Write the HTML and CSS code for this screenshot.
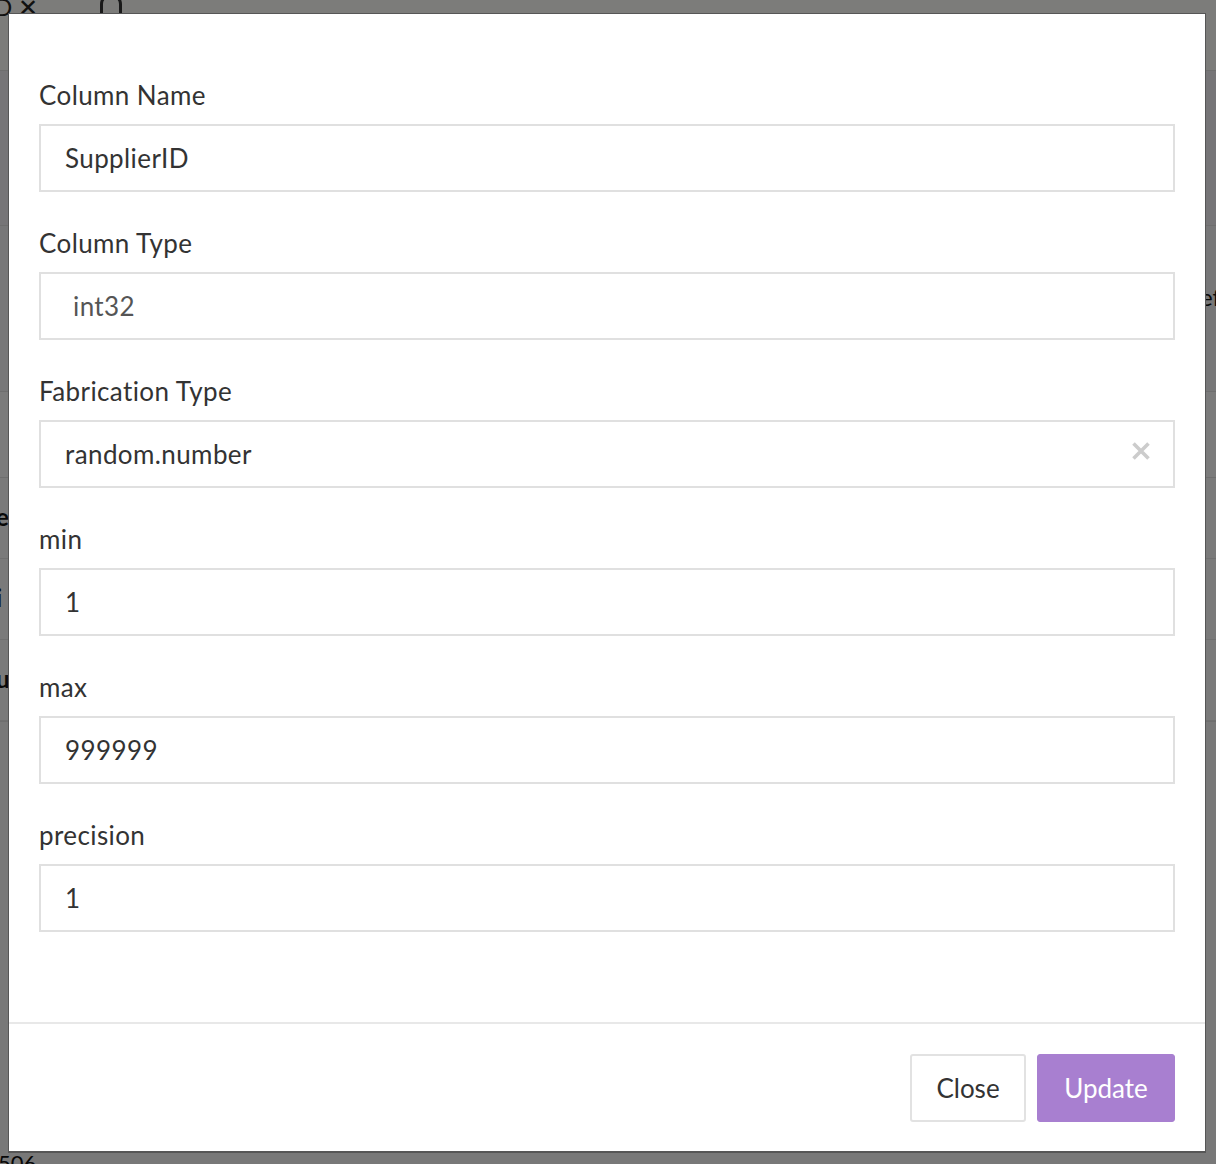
FILE: index.html
```html
<!DOCTYPE html>
<html lang="en">
<head>
<meta charset="utf-8">
<title>Edit Column</title>
<link rel="stylesheet" href="styles.css">
</head>
<body>
<div class="page">
  <div class="topbar"><span class="tb-x">D ✕</span><span class="tb-bell"></span></div>
  <div class="band band-a"></div>
  <div class="band band-b"><span class="frag frag-r">ef</span></div>
  <div class="band band-c"></div>
  <div class="rows">
    <div class="row"><span class="frag">er</span></div>
    <div class="row"><span class="frag">i</span></div>
    <div class="row"><span class="frag">u</span></div>
  </div>
  <div class="foot"><span class="frag">506</span></div>
</div>
<div class="backdrop"></div>
<div class="modal">
  <div class="modal-body">
    <div class="field">
      <label class="label">Column Name</label>
      <div class="input">SupplierID</div>
    </div>
    <div class="field">
      <label class="label">Column Type</label>
      <div class="input input-disabled">int32</div>
    </div>
    <div class="field">
      <label class="label">Fabrication Type</label>
      <div class="input input-select">random.number
        <svg class="clear" width="18" height="18" viewBox="0 0 18 18"><path d="M1.5 1.5 L16.5 16.5 M16.5 1.5 L1.5 16.5" stroke="#cccccc" stroke-width="3.6" stroke-linecap="butt"/></svg>
      </div>
    </div>
    <div class="field">
      <label class="label">min</label>
      <div class="input">1</div>
    </div>
    <div class="field">
      <label class="label">max</label>
      <div class="input">999999</div>
    </div>
    <div class="field">
      <label class="label">precision</label>
      <div class="input">1</div>
    </div>
  </div>
  <div class="modal-footer">
    <button class="btn btn-default">Close</button>
    <button class="btn btn-primary">Update</button>
  </div>
</div>
</body>
</html>
```

FILE: styles.css
```css
html, body {
  margin: 0;
  padding: 0;
  height: 100%;
}
body {
  font-family: "Lato", "Liberation Sans", sans-serif;
  color: #333;
  background: #f5f5f5;
  overflow: hidden;
}
.page {
  height: 1164px;
  display: flex;
  flex-direction: column;
  background: #f7f7f7;
}
.topbar {
  height: 70px;
  background: #f8f9f4;
  border-bottom: 1px solid #ddd;
  position: relative;
}
.tb-x {
  position: absolute;
  left: -6px;
  top: -8px;
  font-size: 24px;
  color: #222;
}
.tb-bell {
  position: absolute;
  left: 100px;
  top: -6px;
  width: 16px;
  height: 16px;
  border: 3px solid #333;
  border-radius: 10px 10px 0 0;
}
.band {
  border-bottom: 1px solid #ddd;
}
.band-a { height: 154px; background: #ecebee; }
.band-b { height: 165px; background: #eeeef0; position: relative; }
.band-c { height: 85px; background: #f6f6f6; }
.rows { display: flex; flex-direction: column; }
.row {
  height: 80px;
  border-bottom: 1px solid #e0e0e0;
  background: #f4f4f4;
  position: relative;
}
.frag {
  position: absolute;
  left: -4px;
  top: 24px;
  font-size: 24px;
  font-weight: bold;
  color: #111;
}
.frag-r { left: 1200px; top: 56px; font-weight: normal; }
.foot { flex: 1; position: relative; background: #f0f0f0; border-top: 1px solid #ddd; }
.foot .frag { top: auto; bottom: -12px; left: -2px; font-weight: normal; font-size: 22px; }

.backdrop {
  position: fixed;
  inset: 0;
  background: rgba(0, 0, 0, 0.5);
}
.modal {
  position: fixed;
  left: 8px;
  top: 13px;
  width: 1196px;
  height: 1137px;
  background: #fff;
  border: 1px solid #565656;
  border-bottom-width: 2px;
  display: flex;
  flex-direction: column;
}
.modal-body {
  padding: 63px 30px 0 30px;
  display: flex;
  flex-direction: column;
  gap: 33px;
  height: 1010px;
  box-sizing: border-box;
  border-bottom: 2px solid #e8e8e8;
}
.field {
  display: flex;
  flex-direction: column;
  gap: 11px;
}
.label {
  font-size: 26px;
  line-height: 36px;
  letter-spacing: 0.4px;
  color: #333;
}
.input {
  height: 68px;
  box-sizing: border-box;
  border: 2px solid #e0e0e0;
  padding: 0 24px;
  display: flex;
  align-items: center;
  font-size: 26px;
  letter-spacing: 0.4px;
  color: #333;
  background: #fff;
}
.input-disabled {
  padding-left: 32px;
  color: #555;
}
.input-select {
  justify-content: space-between;
  padding-right: 23px;
}
.clear {
  transform: translateY(-3px);
}
.modal-footer {
  flex: 1;
  display: flex;
  justify-content: flex-end;
  align-items: center;
  gap: 11px;
  padding: 1px 30px 0 30px;
}
.btn {
  height: 68px;
  font-family: inherit;
  font-size: 26px;
  border-radius: 3px;
  padding: 0 24px;
  cursor: pointer;
}
.btn-default {
  background: #fff;
  border: 2px solid #e2e2e2;
  color: #333;
  width: 116px;
}
.btn-primary {
  background: #a87fd0;
  border: 1px solid #a87fd0;
  color: #fff;
  width: 138px;
}
```
